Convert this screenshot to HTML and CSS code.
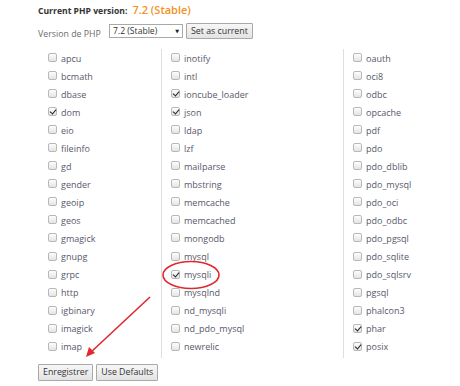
FILE: index.html
```html
<!DOCTYPE html>
<html>
<head>
<meta charset="utf-8">
<link rel="stylesheet" href="styles.css">
</head>
<body>
<div class="page">
  <div class="current">
    <span class="cur-label">Current PHP version:</span>
    <span class="cur-value">7.2 (Stable)</span>
  </div>
  <div class="version-row">
    <span class="ver-label">Version de PHP</span>
    <div class="select"><span>7.2 (Stable)</span><span class="caret">▼</span></div>
    <button class="btn">Set as current</button>
  </div>
  <div class="grid">
    <div class="col first">
      <div class="item"><span class="cb"></span>apcu</div>
      <div class="item"><span class="cb"></span>bcmath</div>
      <div class="item"><span class="cb"></span>dbase</div>
      <div class="item"><span class="cb on"></span>dom</div>
      <div class="item"><span class="cb"></span>eio</div>
      <div class="item"><span class="cb"></span>fileinfo</div>
      <div class="item"><span class="cb"></span>gd</div>
      <div class="item"><span class="cb"></span>gender</div>
      <div class="item"><span class="cb"></span>geoip</div>
      <div class="item"><span class="cb"></span>geos</div>
      <div class="item"><span class="cb"></span>gmagick</div>
      <div class="item"><span class="cb"></span>gnupg</div>
      <div class="item"><span class="cb"></span>grpc</div>
      <div class="item"><span class="cb"></span>http</div>
      <div class="item"><span class="cb"></span>igbinary</div>
      <div class="item"><span class="cb"></span>imagick</div>
      <div class="item"><span class="cb"></span>imap</div>
    </div>
    <div class="col">
      <div class="item"><span class="cb"></span>inotify</div>
      <div class="item"><span class="cb"></span>intl</div>
      <div class="item"><span class="cb on"></span>ioncube_loader</div>
      <div class="item"><span class="cb on"></span>json</div>
      <div class="item"><span class="cb"></span>ldap</div>
      <div class="item"><span class="cb"></span>lzf</div>
      <div class="item"><span class="cb"></span>mailparse</div>
      <div class="item"><span class="cb"></span>mbstring</div>
      <div class="item"><span class="cb"></span>memcache</div>
      <div class="item"><span class="cb"></span>memcached</div>
      <div class="item"><span class="cb"></span>mongodb</div>
      <div class="item"><span class="cb"></span>mysql</div>
      <div class="item"><span class="cb on"></span>mysqli</div>
      <div class="item"><span class="cb"></span>mysqlnd</div>
      <div class="item"><span class="cb"></span>nd_mysqli</div>
      <div class="item"><span class="cb"></span>nd_pdo_mysql</div>
      <div class="item"><span class="cb"></span>newrelic</div>
    </div>
    <div class="col">
      <div class="item"><span class="cb"></span>oauth</div>
      <div class="item"><span class="cb"></span>oci8</div>
      <div class="item"><span class="cb"></span>odbc</div>
      <div class="item"><span class="cb"></span>opcache</div>
      <div class="item"><span class="cb"></span>pdf</div>
      <div class="item"><span class="cb"></span>pdo</div>
      <div class="item"><span class="cb"></span>pdo_dblib</div>
      <div class="item"><span class="cb"></span>pdo_mysql</div>
      <div class="item"><span class="cb"></span>pdo_oci</div>
      <div class="item"><span class="cb"></span>pdo_odbc</div>
      <div class="item"><span class="cb"></span>pdo_pgsql</div>
      <div class="item"><span class="cb"></span>pdo_sqlite</div>
      <div class="item"><span class="cb"></span>pdo_sqlsrv</div>
      <div class="item"><span class="cb"></span>pgsql</div>
      <div class="item"><span class="cb"></span>phalcon3</div>
      <div class="item"><span class="cb on"></span>phar</div>
      <div class="item"><span class="cb on"></span>posix</div>
    </div>
  </div>
  <div class="actions">
    <button class="btn">Enregistrer</button>
    <button class="btn">Use Defaults</button>
  </div>
  <svg class="annot" width="460" height="386" viewBox="0 0 460 386">
    <ellipse cx="191" cy="275" rx="28" ry="13.5" fill="none" stroke="#e0282e" stroke-width="1.6"/>
    <line x1="150" y1="297" x2="90" y2="353" stroke="#e0282e" stroke-width="1.6"/>
    <polygon points="86,357 89,347 95,353" fill="#e0282e"/>
  </svg>
</div>
</body>
</html>
```
FILE: styles.css
```css
* { box-sizing: border-box; }
body {
  margin: 0;
  background: #fff;
  font-family: "Open Sans", "DejaVu Sans", sans-serif;
  color: #555;
}
.page {
  position: relative;
  width: 460px;
  height: 386px;
  padding-left: 38px;
  padding-top: 2px;
}
.current {
  display: flex;
  align-items: baseline;
  gap: 5px;
  height: 16px;
}
.cur-label {
  font-weight: 700;
  font-size: 8.6px;
  color: #333;
}
.cur-value {
  font-weight: 600;
  font-size: 11px;
  color: #f7901e;
}
.version-row {
  display: flex;
  align-items: center;
  height: 20px;
  margin-top: 2px;
}
.ver-label {
  font-size: 8.8px;
  color: #6d6d6d;
  width: 71px;
  padding-top: 7px;
}
.select {
  width: 74px;
  height: 14px;
  border: 1px solid #a9a9a9;
  background: #fff;
  font-size: 8.6px;
  color: #333;
  display: flex;
  align-items: center;
  justify-content: space-between;
  padding: 0 3px 0 3px;
  margin-top: 2px;
}
.caret {
  font-size: 5px;
  color: #222;
}
.btn {
  font-family: "Open Sans", "DejaVu Sans", sans-serif;
  font-size: 8.8px;
  color: #333;
  background: linear-gradient(#f7f7f7, #e3e3e3);
  border: 1px solid #a9a9a9;
  border-radius: 1px;
  height: 16px;
  padding: 0 4px;
  line-height: 14px;
  margin-left: 3px;
  margin-top: 1px;
}
.grid {
  display: grid;
  grid-template-columns: 123px 182px 1fr;
  margin-top: 9px;
}
.col {
  border-left: 1px solid #dedede;
  padding-left: 9px;
  padding-bottom: 2px;
}
.col.first {
  border-left-color: transparent;
}
.item {
  height: 18.06px;
  display: flex;
  align-items: center;
  font-size: 9px;
  color: #58586a;
}
.cb {
  width: 9px;
  height: 9px;
  border: 1px solid #b8b8b8;
  border-radius: 2px;
  background: linear-gradient(#fdfdfd, #e4e4e4);
  margin-right: 4px;
  margin-top: -1px;
  position: relative;
  flex: none;
}
.cb.on::after {
  content: "";
  position: absolute;
  left: 1px;
  top: 1px;
  width: 5px;
  height: 3px;
  border-left: 1.6px solid #222;
  border-bottom: 1.6px solid #222;
  transform: rotate(-50deg);
}
.actions {
  display: flex;
  margin-top: 5px;
}
.actions .btn {
  margin-left: 0;
  margin-right: 3px;
  height: 17px;
  padding: 0 4px;
}
.annot {
  position: absolute;
  left: 0;
  top: 0;
  pointer-events: none;
}
```
